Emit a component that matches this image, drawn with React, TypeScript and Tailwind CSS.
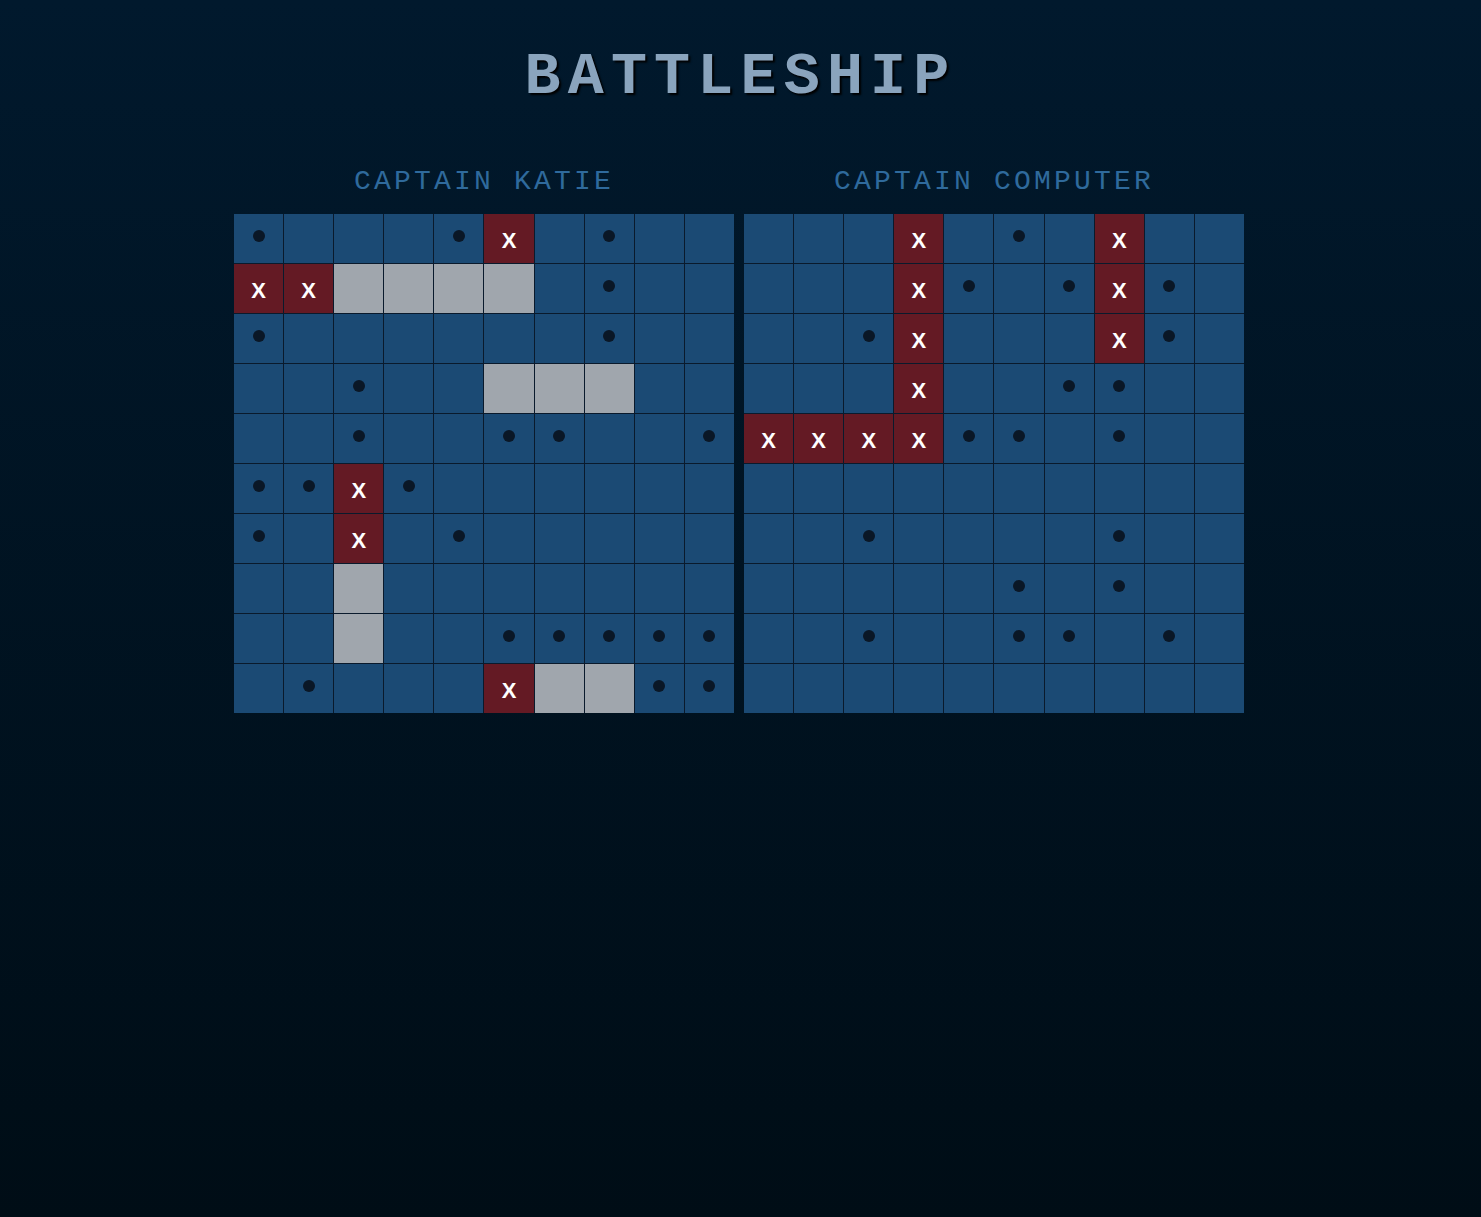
import React from "react";

type Cell = "" | "m" | "h" | "s";

// m = miss (dot), h = hit (X), s = ship (grey)
const katie: string[] = [
  "m...mh.m..",
  "hhssss.m..",
  "m......m..",
  "..m..sss..",
  "..m..mm..m",
  "mmhm......",
  "m.h.m.....",
  "..s.......",
  "..s..mmmmm",
  ".m...hssmm",
];

const computer: string[] = [
  "...h.m.h..",
  "...hm.mhm.",
  "..mh...hm.",
  "...h..mm..",
  "hhhhmm.m..",
  "..........",
  "..m....m..",
  ".....m.m..",
  "..m..mm.m.",
  "..........",
];

function parse(rows: string[]): Cell[][] {
  return rows.map((r) => r.split("").map((c) => (c === "." ? "" : (c as Cell))));
}

function Square({ value }: { value: Cell }) {
  const bg =
    value === "h" ? "bg-[#641a24]" : value === "s" ? "bg-[#a0a6ad]" : "bg-[#1b4a74]";
  return (
    <div className={`flex h-[49px] items-center justify-center ${bg}`}>
      {value === "m" && <span className="-mt-[5px] h-3 w-3 rounded-full bg-[#0a1726]" />}
      {value === "h" && (
        <span className="mt-[5px] font-['Liberation_Sans',Arial,sans-serif] text-[22px] font-bold leading-none text-white">
          X
        </span>
      )}
    </div>
  );
}

function Board({ title, rows }: { title: string; rows: string[] }) {
  const grid = parse(rows);
  return (
    <div className="flex flex-col items-center">
      <h2 className="mb-[18px] font-['Courier_New',Courier,monospace] text-[28px] leading-[28px] tracking-[3.2px] text-[#2f6a9c]">
        {title}
      </h2>
      <div className="grid w-[500px] grid-cols-10 gap-px bg-[#0a1a2c]">
        {grid.flatMap((row, r) => row.map((v, c) => <Square key={`${r}-${c}`} value={v} />))}
      </div>
    </div>
  );
}

export default function App() {
  return (
    <div className="flex min-h-screen flex-col items-center bg-gradient-to-b from-[#01192d] to-[#000d16] pt-[47px]">
      <h1 className="mb-[61px] font-['Courier_New',Courier,monospace] text-[60px] font-bold leading-[60px] tracking-[0.12em] text-[#8aa4bd] [text-shadow:2px_2px_2px_#000]">
        BATTLESHIP
      </h1>
      <div className="flex gap-[10px] pr-[3px]">
        <Board title="CAPTAIN KATIE" rows={katie} />
        <Board title="CAPTAIN COMPUTER" rows={computer} />
      </div>
    </div>
  );
}
